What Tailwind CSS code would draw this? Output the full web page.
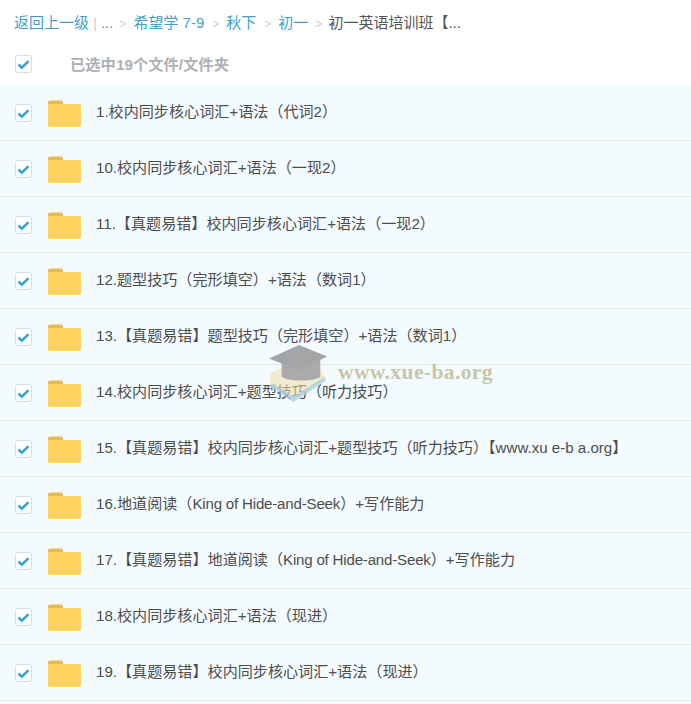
<!DOCTYPE html>
<html lang="zh-CN">
<head>
  <meta charset="UTF-8">
  <meta name="viewport" content="width=device-width, initial-scale=1.0">
  <title>已选中19个文件/文件夹</title>
  <script src="https://cdn.jsdelivr.net/npm/@tailwindcss/browser@4"></script>
</head>
<body class="bg-white h-[704px] overflow-hidden relative font-['Liberation_Sans','Noto_Sans_CJK_SC',sans-serif] text-[15px] text-[#4d4d4d]">
  <!-- breadcrumb -->
  <div class="h-[47px] pl-[14px] flex items-center whitespace-nowrap">
    <a class="text-[#3f9fc9]">返回上一级</a>
    <span class="ml-[4px] text-[#d0d0d0]">|</span>
    <span class="ml-[4px] text-[#888]">...</span>
    <span class="ml-[6px] text-[#ccc] text-[12px]">&gt;</span>
    <a class="ml-[7px] text-[#3f9fc9]">希望学 7-9</a>
    <span class="ml-[8px] text-[#ccc] text-[12px]">&gt;</span>
    <a class="ml-[7px] text-[#3f9fc9]">秋下</a>
    <span class="ml-[8px] text-[#ccc] text-[12px]">&gt;</span>
    <a class="ml-[7px] text-[#3f9fc9]">初一</a>
    <span class="ml-[7px] text-[#ccc] text-[12px]">&gt;</span>
    <span class="ml-[6px] text-[#555]">初一英语培训班【...</span>
  </div>

  <!-- select all -->
  <div class="h-[38px] pl-[15px] flex items-start">
    <svg class="w-[17px] h-[18px] mt-[8px] shrink-0" viewBox="0 0 17 18"><rect x="0.5" y="0.5" width="16" height="17" rx="2" fill="#fff" stroke="#d5dde3"/><path d="M3.5 9.500l3.400 3.200 6.600-6.600" fill="none" stroke="#3a9fd6" stroke-width="2.600"/></svg>
    <span class="ml-[38px] mt-[7px] font-bold text-[15.3px] text-[#adb1b6]">已选中19个文件/文件夹</span>
  </div>

  <!-- file list -->
  <div id="list" class="bg-[#f3fbfe] text-[15.1px]">
    <div class="h-[56px] border-b border-[#dfeaf0] pl-[15px] flex items-center">
      <svg class="w-[17px] h-[18px] shrink-0" viewBox="0 0 17 18"><rect x="0.5" y="0.5" width="16" height="17" rx="2" fill="#fff" stroke="#d5dde3"/><path d="M3.5 9.500l3.400 3.200 6.600-6.600" fill="none" stroke="#3a9fd6" stroke-width="2.600"/></svg>
      <svg class="w-[33px] h-[28px] ml-[16px] shrink-0" viewBox="0 0 33 28"><path d="M0 3.500a2 2 0 0 1 2-2h11a2 2 0 0 1 2 2v2H0z" fill="#e9b958"/><rect y="5" width="33" height="23" rx="2" fill="#fed35e"/></svg>
      <span class="ml-[15px] whitespace-nowrap">1.校内同步核心词汇+语法（代词2）</span>
    </div>
    <div class="h-[56px] border-b border-[#dfeaf0] pl-[15px] flex items-center">
      <svg class="w-[17px] h-[18px] shrink-0" viewBox="0 0 17 18"><rect x="0.5" y="0.5" width="16" height="17" rx="2" fill="#fff" stroke="#d5dde3"/><path d="M3.5 9.500l3.400 3.200 6.600-6.600" fill="none" stroke="#3a9fd6" stroke-width="2.600"/></svg>
      <svg class="w-[33px] h-[28px] ml-[16px] shrink-0" viewBox="0 0 33 28"><path d="M0 3.500a2 2 0 0 1 2-2h11a2 2 0 0 1 2 2v2H0z" fill="#e9b958"/><rect y="5" width="33" height="23" rx="2" fill="#fed35e"/></svg>
      <span class="ml-[15px] whitespace-nowrap">10.校内同步核心词汇+语法（一现2）</span>
    </div>
    <div class="h-[56px] border-b border-[#dfeaf0] pl-[15px] flex items-center">
      <svg class="w-[17px] h-[18px] shrink-0" viewBox="0 0 17 18"><rect x="0.5" y="0.5" width="16" height="17" rx="2" fill="#fff" stroke="#d5dde3"/><path d="M3.5 9.500l3.400 3.200 6.600-6.600" fill="none" stroke="#3a9fd6" stroke-width="2.600"/></svg>
      <svg class="w-[33px] h-[28px] ml-[16px] shrink-0" viewBox="0 0 33 28"><path d="M0 3.500a2 2 0 0 1 2-2h11a2 2 0 0 1 2 2v2H0z" fill="#e9b958"/><rect y="5" width="33" height="23" rx="2" fill="#fed35e"/></svg>
      <span class="ml-[15px] whitespace-nowrap">11.【真题易错】校内同步核心词汇+语法（一现2）</span>
    </div>
    <div class="h-[56px] border-b border-[#dfeaf0] pl-[15px] flex items-center">
      <svg class="w-[17px] h-[18px] shrink-0" viewBox="0 0 17 18"><rect x="0.5" y="0.5" width="16" height="17" rx="2" fill="#fff" stroke="#d5dde3"/><path d="M3.5 9.500l3.400 3.200 6.600-6.600" fill="none" stroke="#3a9fd6" stroke-width="2.600"/></svg>
      <svg class="w-[33px] h-[28px] ml-[16px] shrink-0" viewBox="0 0 33 28"><path d="M0 3.500a2 2 0 0 1 2-2h11a2 2 0 0 1 2 2v2H0z" fill="#e9b958"/><rect y="5" width="33" height="23" rx="2" fill="#fed35e"/></svg>
      <span class="ml-[15px] whitespace-nowrap">12.题型技巧（完形填空）+语法（数词1）</span>
    </div>
    <div class="h-[56px] border-b border-[#dfeaf0] pl-[15px] flex items-center">
      <svg class="w-[17px] h-[18px] shrink-0" viewBox="0 0 17 18"><rect x="0.5" y="0.5" width="16" height="17" rx="2" fill="#fff" stroke="#d5dde3"/><path d="M3.5 9.500l3.400 3.200 6.600-6.600" fill="none" stroke="#3a9fd6" stroke-width="2.600"/></svg>
      <svg class="w-[33px] h-[28px] ml-[16px] shrink-0" viewBox="0 0 33 28"><path d="M0 3.500a2 2 0 0 1 2-2h11a2 2 0 0 1 2 2v2H0z" fill="#e9b958"/><rect y="5" width="33" height="23" rx="2" fill="#fed35e"/></svg>
      <span class="ml-[15px] whitespace-nowrap">13.【真题易错】题型技巧（完形填空）+语法（数词1）</span>
    </div>
    <div class="h-[56px] border-b border-[#dfeaf0] pl-[15px] flex items-center">
      <svg class="w-[17px] h-[18px] shrink-0" viewBox="0 0 17 18"><rect x="0.5" y="0.5" width="16" height="17" rx="2" fill="#fff" stroke="#d5dde3"/><path d="M3.5 9.500l3.400 3.200 6.600-6.600" fill="none" stroke="#3a9fd6" stroke-width="2.600"/></svg>
      <svg class="w-[33px] h-[28px] ml-[16px] shrink-0" viewBox="0 0 33 28"><path d="M0 3.500a2 2 0 0 1 2-2h11a2 2 0 0 1 2 2v2H0z" fill="#e9b958"/><rect y="5" width="33" height="23" rx="2" fill="#fed35e"/></svg>
      <span class="ml-[15px] whitespace-nowrap">14.校内同步核心词汇+题型技巧（听力技巧）</span>
    </div>
    <div class="h-[56px] border-b border-[#dfeaf0] pl-[15px] flex items-center">
      <svg class="w-[17px] h-[18px] shrink-0" viewBox="0 0 17 18"><rect x="0.5" y="0.5" width="16" height="17" rx="2" fill="#fff" stroke="#d5dde3"/><path d="M3.5 9.500l3.400 3.200 6.600-6.600" fill="none" stroke="#3a9fd6" stroke-width="2.600"/></svg>
      <svg class="w-[33px] h-[28px] ml-[16px] shrink-0" viewBox="0 0 33 28"><path d="M0 3.500a2 2 0 0 1 2-2h11a2 2 0 0 1 2 2v2H0z" fill="#e9b958"/><rect y="5" width="33" height="23" rx="2" fill="#fed35e"/></svg>
      <span class="ml-[15px] whitespace-nowrap">15.【真题易错】校内同步核心词汇+题型技巧（听力技巧）【www.xu e-b a.org】</span>
    </div>
    <div class="h-[56px] border-b border-[#dfeaf0] pl-[15px] flex items-center">
      <svg class="w-[17px] h-[18px] shrink-0" viewBox="0 0 17 18"><rect x="0.5" y="0.5" width="16" height="17" rx="2" fill="#fff" stroke="#d5dde3"/><path d="M3.5 9.500l3.400 3.200 6.600-6.600" fill="none" stroke="#3a9fd6" stroke-width="2.600"/></svg>
      <svg class="w-[33px] h-[28px] ml-[16px] shrink-0" viewBox="0 0 33 28"><path d="M0 3.500a2 2 0 0 1 2-2h11a2 2 0 0 1 2 2v2H0z" fill="#e9b958"/><rect y="5" width="33" height="23" rx="2" fill="#fed35e"/></svg>
      <span class="ml-[15px] whitespace-nowrap">16.地道阅读（<span class="tracking-[-0.2px]">King of Hide-and-Seek</span>）+写作能力</span>
    </div>
    <div class="h-[56px] border-b border-[#dfeaf0] pl-[15px] flex items-center">
      <svg class="w-[17px] h-[18px] shrink-0" viewBox="0 0 17 18"><rect x="0.5" y="0.5" width="16" height="17" rx="2" fill="#fff" stroke="#d5dde3"/><path d="M3.5 9.500l3.400 3.200 6.600-6.600" fill="none" stroke="#3a9fd6" stroke-width="2.600"/></svg>
      <svg class="w-[33px] h-[28px] ml-[16px] shrink-0" viewBox="0 0 33 28"><path d="M0 3.500a2 2 0 0 1 2-2h11a2 2 0 0 1 2 2v2H0z" fill="#e9b958"/><rect y="5" width="33" height="23" rx="2" fill="#fed35e"/></svg>
      <span class="ml-[15px] whitespace-nowrap">17.【真题易错】地道阅读（<span class="tracking-[-0.2px]">King of Hide-and-Seek</span>）+写作能力</span>
    </div>
    <div class="h-[56px] border-b border-[#dfeaf0] pl-[15px] flex items-center">
      <svg class="w-[17px] h-[18px] shrink-0" viewBox="0 0 17 18"><rect x="0.5" y="0.5" width="16" height="17" rx="2" fill="#fff" stroke="#d5dde3"/><path d="M3.5 9.500l3.400 3.200 6.600-6.600" fill="none" stroke="#3a9fd6" stroke-width="2.600"/></svg>
      <svg class="w-[33px] h-[28px] ml-[16px] shrink-0" viewBox="0 0 33 28"><path d="M0 3.500a2 2 0 0 1 2-2h11a2 2 0 0 1 2 2v2H0z" fill="#e9b958"/><rect y="5" width="33" height="23" rx="2" fill="#fed35e"/></svg>
      <span class="ml-[15px] whitespace-nowrap">18.校内同步核心词汇+语法（现进）</span>
    </div>
    <div class="h-[56px] border-b border-[#dfeaf0] pl-[15px] flex items-center">
      <svg class="w-[17px] h-[18px] shrink-0" viewBox="0 0 17 18"><rect x="0.5" y="0.5" width="16" height="17" rx="2" fill="#fff" stroke="#d5dde3"/><path d="M3.5 9.500l3.400 3.200 6.600-6.600" fill="none" stroke="#3a9fd6" stroke-width="2.600"/></svg>
      <svg class="w-[33px] h-[28px] ml-[16px] shrink-0" viewBox="0 0 33 28"><path d="M0 3.500a2 2 0 0 1 2-2h11a2 2 0 0 1 2 2v2H0z" fill="#e9b958"/><rect y="5" width="33" height="23" rx="2" fill="#fed35e"/></svg>
      <span class="ml-[15px] whitespace-nowrap">19.【真题易错】校内同步核心词汇+语法（现进）</span>
    </div>
    <div class="h-[4px]"></div>
  </div>

  <!-- watermark over the list -->
  <div class="absolute left-[268px] top-[344px] flex items-start pointer-events-none">
    <svg class="w-[64px] h-[60px]" viewBox="0 0 66 62">
      <path d="M2 30l14-6 38 2 6 10-30 20L2 44z" fill="#f3dfa8" opacity="0.55"/>
      <path d="M2 44l24 16 34-22-2-4-32 20L4 40z" fill="#a9cde0" opacity="0.75"/>
      <path d="M14 16h40v18c-8 5-32 5-40 0z" fill="#a9abad"/>
      <path d="M1 15L32 1l29 12-29 14z" fill="#a3a5a7"/>
    </svg>
    <span class="ml-[6px] mt-[15px] font-['Liberation_Serif',serif] font-bold text-[21.5px] leading-[26px] tracking-[0.4px] text-[#c9c5ab]">www.xue-ba.org</span>
  </div>
</body>
</html>
